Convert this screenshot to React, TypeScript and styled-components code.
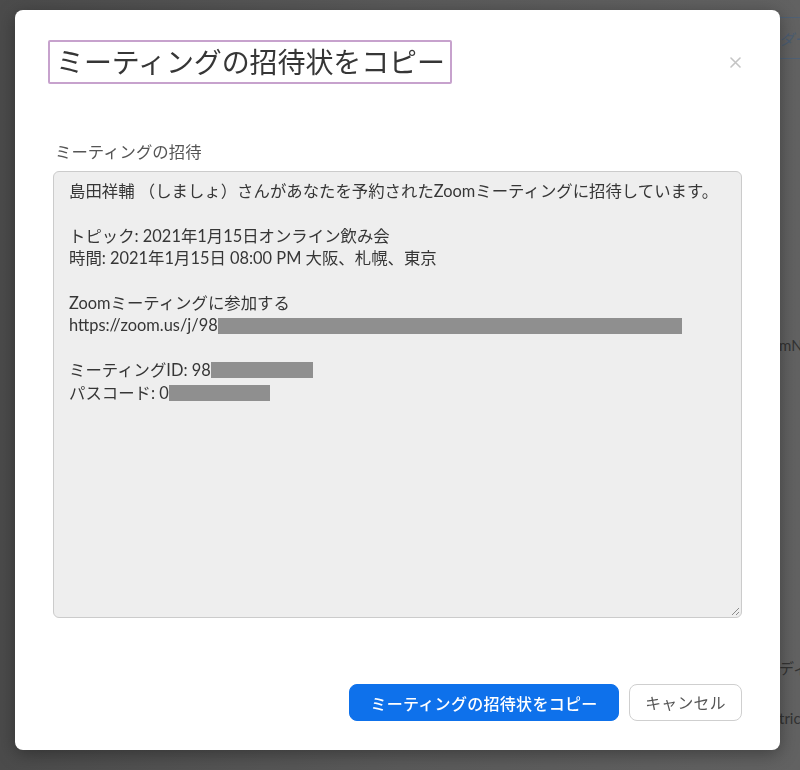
import React from "react";
import styled, { createGlobalStyle } from "styled-components";

const GlobalStyle = createGlobalStyle`
  html, body { margin: 0; padding: 0; }
  body {
    width: 800px;
    height: 770px;
    overflow: hidden;
    background: linear-gradient(90deg, #4b4b4b 0%, #5a5a5a 50%, #626262 100%);
    font-family: Lato, "Noto Sans CJK JP", "Noto Sans", sans-serif;
  }
`;

const Page = styled.div`
  position: relative;
  width: 800px;
  height: 770px;
`;

const BackPage = styled.div`
  display: flex;
  flex-direction: column;
  padding-left: 779px;
  width: 21px;
  overflow: hidden;
  color: #2e2e2e;
  font-size: 15px;
  white-space: nowrap;
`;

const BackTopBar = styled.div`
  margin-top: 17px;
  height: 40px;
  border-top: 1px solid #4f6175;
  border-bottom: 1px solid #4f6175;
  display: flex;
  align-items: center;
  color: #4b5d72;
  font-style: italic;
`;

const BackText = styled.div<{ $gap: number }>`
  margin-top: ${(p) => p.$gap}px;
  height: 20px;
  line-height: 20px;
  color: #333;
`;

const Overlay = styled.div`
  position: fixed;
  inset: 0;
  padding: 10px 20px 20px 15px;
`;

const Modal = styled.div`
  width: 765px;
  height: 740px;
  box-sizing: border-box;
  background: #fff;
  border-radius: 8px;
  box-shadow: 0 4px 18px rgba(0, 0, 0, 0.35);
  padding: 30px 38px 29px 38px;
  display: flex;
  flex-direction: column;
`;

const Header = styled.div`
  display: flex;
  align-items: center;
  justify-content: space-between;
  height: 44px;
`;

const TitleBox = styled.div`
  margin-left: -5px;
  height: 44px;
  box-sizing: border-box;
  border: 2px solid #c7a2cd;
  border-radius: 2px;
  padding: 0 5px 0 6px;
  display: flex;
  align-items: center;
`;

const Title = styled.h1`
  margin: 0;
  font-size: 28px;
  font-weight: 400;
  color: #363636;
  line-height: 1;
  letter-spacing: -0.1px;
`;

const CloseButton = styled.button`
  width: 16px;
  height: 16px;
  padding: 0;
  margin-right: -1px;
  border: none;
  background: none;
  display: flex;
  align-items: center;
  justify-content: center;
`;

const Label = styled.div`
  margin-top: 58px;
  height: 20px;
  line-height: 20px;
  font-size: 16.4px;
  color: #555;
  padding-left: 2px;
`;

const InviteBox = styled.div`
  position: relative;
  margin-top: 9px;
  height: 447px;
  box-sizing: border-box;
  background: #eeeeee;
  border: 1px solid #cbcbcb;
  border-radius: 6px;
  padding: 8px 15px;
  font-size: 16.4px;
  line-height: 22.4px;
  color: #363636;
`;

const Line = styled.div`
  height: 22.4px;
  white-space: nowrap;
  display: flex;
  align-items: center;
`;

const Redact = styled.span<{ $w: number }>`
  display: inline-block;
  width: ${(p) => p.$w}px;
  height: 16px;
  background: #8f8f8f;
`;

const Grip = styled.svg`
  position: absolute;
  right: 1px;
  bottom: 1px;
`;

const Footer = styled.div`
  margin-top: 66px;
  display: flex;
  justify-content: flex-end;
  gap: 10px;
`;

const Button = styled.button<{ $primary?: boolean; $w: number }>`
  width: ${(p) => p.$w}px;
  height: 37px;
  border-radius: 8px;
  font-family: Lato, "Noto Sans CJK JP", sans-serif;
  font-size: ${(p) => (p.$primary ? 16 : 15.8)}px;
  font-weight: ${(p) => (p.$primary ? 500 : 400)};
  box-sizing: border-box;
  border: 1px solid ${(p) => (p.$primary ? "#0e71eb" : "#cfcfcf")};
  background: ${(p) => (p.$primary ? "#0e71eb" : "#fff")};
  color: ${(p) => (p.$primary ? "#fff" : "#555")};
  padding: 0;
  letter-spacing: 0.3px;
`;

export default function App() {
  return (
    <Page>
      <GlobalStyle />
      <BackPage>
        <BackTopBar>ダー</BackTopBar>
        <BackText $gap={276}>mN</BackText>
        <BackText $gap={303}>ディ</BackText>
        <BackText $gap={30}>tric</BackText>
      </BackPage>
      <Overlay>
        <Modal>
          <Header>
            <TitleBox>
              <Title>ミーティングの招待状をコピー</Title>
            </TitleBox>
            <CloseButton aria-label="閉じる">
              <svg width="11" height="11" viewBox="0 0 11 11">
                <path d="M1 1 L10 10 M10 1 L1 10" stroke="#c4c4c4" strokeWidth="1.6" strokeLinecap="round" />
              </svg>
            </CloseButton>
          </Header>
          <Label>ミーティングの招待</Label>
          <InviteBox>
            <Line>島田祥輔 （しましょ）さんがあなたを予約されたZoomミーティングに招待しています。</Line>
            <Line />
            <Line>トピック: 2021年1月15日オンライン飲み会</Line>
            <Line>時間: 2021年1月15日 08:00 PM 大阪、札幌、東京</Line>
            <Line />
            <Line>Zoomミーティングに参加する</Line>
            <Line>
              https://zoom.us/j/98<Redact $w={464} />
            </Line>
            <Line />
            <Line>
              ミーティングID: 98<Redact $w={102} />
            </Line>
            <Line>
              パスコード: 0<Redact $w={101} />
            </Line>
            <Grip width="10" height="10" viewBox="0 0 10 10">
              <path d="M9 2 L2 9 M9 6 L6 9" stroke="#8a8a8a" strokeWidth="1" />
            </Grip>
          </InviteBox>
          <Footer>
            <Button $primary $w={270}>ミーティングの招待状をコピー</Button>
            <Button $w={113}>キャンセル</Button>
          </Footer>
        </Modal>
      </Overlay>
    </Page>
  );
}
